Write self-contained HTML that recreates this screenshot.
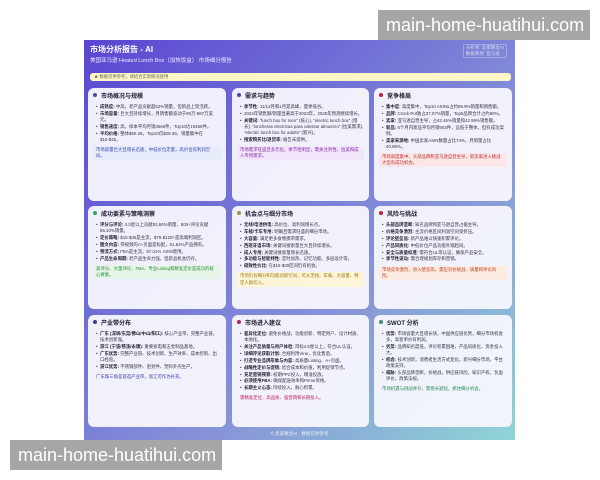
<!DOCTYPE html>
<html><head><meta charset="utf-8"><style>
*{margin:0;padding:0;box-sizing:border-box}
body{width:600px;height:480px;background:#fff;position:relative;overflow:hidden;font-family:"Liberation Sans","Noto Sans CJK SC",sans-serif}
.card{position:absolute;left:84px;top:40px;width:431px;height:400px;background:linear-gradient(135deg,#5a46d2 0%,#7270d6 35%,#8896d8 65%,#8ed6d6 100%)}
.wm{position:absolute;background:#a6a6a6;color:#fff;font-size:18px;line-height:30px;padding:0 8px;width:212px;height:30px;white-space:nowrap}
.t1{position:absolute;left:6px;top:4px;color:#fff;font-size:8px;font-weight:bold}
.t2{position:absolute;left:6px;top:16px;color:#eef;font-size:5.5px}
.tr{position:absolute;right:8px;top:4px;color:#dde;font-size:4.5px;line-height:6px;border:1px solid rgba(255,255,255,.3);padding:0 2px;border-radius:2px}
.note{position:absolute;left:6px;top:33px;width:421px;height:8px;background:#fdf7c8;border-radius:3px;font-size:4.3px;color:#665;line-height:8px;padding-left:4px}
.p{position:absolute;background:rgba(246,246,253,.96);border-radius:6px;padding:5px 5px;font-size:4.4px;line-height:6.1px;color:#334}
.h{font-size:6px;font-weight:bold;color:#223;margin-bottom:3px;line-height:7px}
.h:before{content:"";display:inline-block;width:4px;height:4px;border-radius:50%;background:var(--c);margin-right:4px;vertical-align:1px}
ul{list-style:none;margin-left:3px}
li{padding-left:4px;position:relative;margin-bottom:.8px}
li:before{content:"•";position:absolute;left:0}
b{color:#223}
.s{margin-top:3px;padding:1px 3px;border-radius:2px}
.foot{position:absolute;left:0;right:0;top:391px;text-align:center;color:#e8eef8;font-size:4.5px}
</style></head><body>
<div class="wm" style="left:378px;top:10px">main-home-huatihui.com</div>
<div class="card">
<div class="t1">市场分析报告 - AI</div>
<div class="t2">美国亚马逊 Heated Lunch Box（加热饭盒） 市场细分报告</div>
<div class="tr">分析师: 卖家精灵AI<br>数据来源: 亚马逊</div>
<div class="note">★ 数据仅供参考，请结合实际情况使用</div>

<div class="p" style="left:4px;top:48px;width:138px;height:113px;--c:#4a48b0">
<div class="h">市场概况与规模</div><ul>
<li><b>成熟度:</b> 中高，老产品贡献超52%销量，但新品上架活跃。</li>
<li><b>市场容量:</b> 巨大且持续增长，月销售额波动于99万-887万美元。</li>
<li><b>销售速度:</b> 高，样本平均月销3666件，Top10达19469件。</li>
<li><b>平均价格:</b> 整体$60.26，Top10仅$28.39，销量集中在$15-$45。</li></ul>
<div class="s" style="background:#e6ecfa;color:#3848b0">市场容量巨大且增长迅速，中低价位走量，高价位有利润空间。</div></div>

<div class="p" style="left:148px;top:48px;width:137px;height:113px;--c:#4a48b0">
<div class="h">需求与趋势</div><ul>
<li><b>季节性:</b> 11/12月和1月是高峰，夏季低谷。</li>
<li>2024年销售额/销量显著高于2023年，2025年预测继续增长。</li>
<li><b>关键词:</b> "lunch box for men" (核心), "electric lunch box" (增长), "loncheras electricas para calentar almuerzo" (拉美需求), "electric lunch box for adults" (新兴)。</li>
<li><b>搜索购买比/退货率:</b> 报告未提供。</li></ul>
<div class="s" style="background:#f1e6fa;color:#8a2ab0">市场需求旺盛且多元化，季节性明显，需关注男性、拉美和成人专用需求。</div></div>

<div class="p" style="left:290px;top:48px;width:138px;height:113px;--c:#c02040">
<div class="h">竞争格局</div><ul>
<li><b>集中度:</b> 高度集中，Top10 ASINs占约59.9%销量和销售额。</li>
<li><b>品牌:</b> Crock-Pot独占37.07%销量，Top5品牌合计占约60%。</li>
<li><b>卖家:</b> 亚马逊自营主导，占42.46%销量和42.96%销售额。</li>
<li><b>新品:</b> 6个月内新品平均月销903件，远低于整体，但有成功案例。</li>
<li><b>卖家来源地:</b> 中国卖家ASIN数量占比74%，月销量占比40.89%。</li></ul>
<div class="s" style="background:#fbe7e7;color:#c03030">市场高度集中，头部品牌和亚马逊自营主导，新卖家进入挑战大但有成功机会。</div></div>

<div class="p" style="left:4px;top:166px;width:138px;height:103px;--c:#40a060">
<div class="h">成功要素与策略洞察</div><ul>
<li><b>评分与评论:</b> 4.3星以上贡献93.84%销量，500+评论贡献85.10%销量。</li>
<li><b>定价策略:</b> $15-$45是主流，$75-$120+是高端利润区。</li>
<li><b>图文内容:</b> 带视频的A+页面是标配，61.82%产品拥有。</li>
<li><b>物流方式:</b> FBA是主流，87.01% ASIN使用。</li>
<li><b>产品生命周期:</b> 老产品生命力强，但新品机会仍存。</li></ul>
<div class="s" style="background:#e6f5e8;color:#2f8a3a">高评分、大量评论、FBA、专业Listing和精准定价是成功的核心要素。</div></div>

<div class="p" style="left:148px;top:166px;width:137px;height:103px;--c:#a09050">
<div class="h">机会点与细分市场</div><ul>
<li><b>无线/电池供电:</b> 高价位、高利润增长点。</li>
<li><b>车载/卡车专用:</b> 明确且需求旺盛的细分市场。</li>
<li><b>大容量:</b> 满足更多食物携带需求。</li>
<li><b>西班牙语市场:</b> 关键词搜索量巨大且持续增长。</li>
<li><b>成人专用:</b> 关键词搜索量增长迅速。</li>
<li><b>多功能与智能特性:</b> 定时加热、记忆功能、多层设计等。</li>
<li><b>极致性价比:</b> 在$15-$30区间仍有机会。</li></ul>
<div class="s" style="background:#fdf5d8;color:#a07818">市场仍有细分和功能创新空间，可从无线、车载、大容量、特定人群切入。</div></div>

<div class="p" style="left:290px;top:166px;width:138px;height:103px;--c:#c02040">
<div class="h">风险与挑战</div><ul>
<li><b>头部品牌垄断:</b> 知名品牌和亚马逊自营占据主导。</li>
<li><b>价格竞争激烈:</b> 主流价格区间利润空间受挤压。</li>
<li><b>评论壁垒高:</b> 新产品难以快速积累评论。</li>
<li><b>产品同质化:</b> 中低价位产品功能外观趋同。</li>
<li><b>安全与质量标准:</b> 需符合UL等认证，确保产品安全。</li>
<li><b>季节性波动:</b> 需合理规划库存和营销。</li></ul>
<div class="s" style="background:#fcebe2;color:#c04020">市场竞争激烈，进入壁垒高，需应对价格战、质量和评论风险。</div></div>

<div class="p" style="left:4px;top:275px;width:138px;height:112px;--c:#3a3aa0">
<div class="h">产业带分布</div><ul>
<li><b>广东 (深圳/东莞/佛山/中山/阳江):</b> 核心产业带，完整产业链，技术创新强。</li>
<li><b>浙江 (宁波/慈溪/永康):</b> 重要家电和五金制品基地。</li>
<li><b>广东优势:</b> 完整产业链、技术创新、生产效率、成本控制、出口经验。</li>
<li><b>浙江优势:</b> 不锈钢部件、密封件、塑料外壳生产。</li></ul>
<div class="s" style="color:#3838b0">广东珠三角是首选产业带，浙江可作为补充。</div></div>

<div class="p" style="left:148px;top:275px;width:137px;height:112px;--c:#c02050">
<div class="h">市场进入建议</div><ul>
<li><b>差异化定位:</b> 避免价格战，功能创新、特定用户、设计材质、本地化。</li>
<li><b>关注产品质量与用户体验:</b> 目标4.5星以上，符合UL认证。</li>
<li><b>详细评论获取计划:</b> 合规利用Vine，优化售后。</li>
<li><b>打造专业品牌形象与内容:</b> 高质量Listing、A+页面。</li>
<li><b>战略性定价与促销:</b> 结合成本和价值，利用促销节点。</li>
<li><b>充足营销预算:</b> 初期PPC投入，精准投放。</li>
<li><b>必须使用FBA:</b> 确保配送效率和Prime资格。</li>
<li><b>长期主义心态:</b> 持续投入，耐心积累。</li></ul>
<div class="s" style="color:#c02060">需精准定位、高品质、强营销和长期投入。</div></div>

<div class="p" style="left:290px;top:275px;width:138px;height:112px;--c:#409070">
<div class="h">SWOT 分析</div><ul>
<li><b>优势:</b> 市场容量大且增长快，中国供应链优势，细分市场机会多，高客单价有利润。</li>
<li><b>劣势:</b> 品牌知名度低，评论积累困难，产品同质化，资金投入大。</li>
<li><b>机会:</b> 技术创新，消费者生活方式变化，新兴细分市场，平台政策支持。</li>
<li><b>威胁:</b> 头部品牌垄断，价格战，供应链风险，知识产权，负面评价，政策法规。</li></ul>
<div class="s" style="color:#2f8a5a">市场机遇与挑战并存，需扬长避短，抓住细分机会。</div></div>

<div class="foot">© 卖家精灵AI · 数据仅供参考</div>
</div>
<div class="wm" style="left:10px;top:440px">main-home-huatihui.com</div>
</body></html>
